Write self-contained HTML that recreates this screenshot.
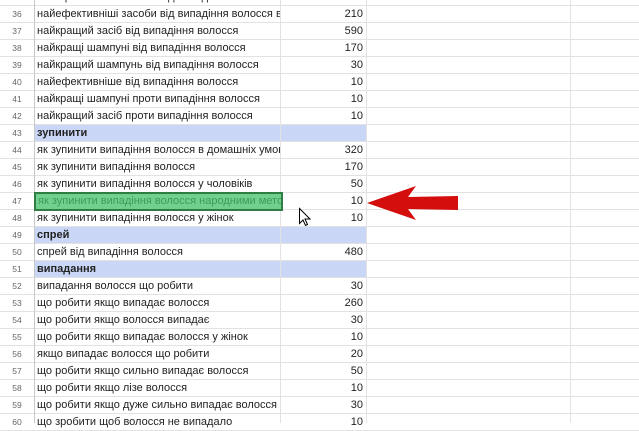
<!DOCTYPE html><html><head><meta charset="utf-8"><style>
body{margin:0;width:639px;height:423px;overflow:hidden;background:#fff;position:relative;font-family:"Liberation Sans",Arial,sans-serif}
.r{position:absolute;left:0;width:639px;height:17px;border-bottom:1px solid #e2e2e2;box-sizing:border-box}
.n{position:absolute;left:0;width:34px;height:16px;font-size:8.5px;color:#666;text-align:center;line-height:17px}
.a{position:absolute;left:35px;width:245px;height:16px;font-size:11px;color:#222;line-height:16px;white-space:nowrap;overflow:hidden;padding-left:2px;box-sizing:border-box}
.b{position:absolute;left:281px;width:85px;height:16px;font-size:11px;color:#222;line-height:16px;text-align:right;padding-right:3px;box-sizing:border-box}
.h .a,.h .b{background:#c9d6f6;font-weight:bold}
.v{position:absolute;top:0;height:423px;width:1px;background:#e2e2e2}
</style></head><body>
<div id="rows"></div>
<div class="r" style="top:-11px"><div class="n">35</div><div class="a">найефективніші засоби від випадіння волосся</div><div class="b">200</div></div>
<div class="r" style="top:6px"><div class="n">36</div><div class="a">найефективніші засоби від випадіння волосся в</div><div class="b">210</div></div>
<div class="r" style="top:23px"><div class="n">37</div><div class="a">найкращий засіб від випадіння волосся</div><div class="b">590</div></div>
<div class="r" style="top:40px"><div class="n">38</div><div class="a">найкращі шампуні від випадіння волосся</div><div class="b">170</div></div>
<div class="r" style="top:57px"><div class="n">39</div><div class="a">найкращий шампунь від випадіння волосся</div><div class="b">30</div></div>
<div class="r" style="top:74px"><div class="n">40</div><div class="a">найефективніше від випадіння волосся</div><div class="b">10</div></div>
<div class="r" style="top:91px"><div class="n">41</div><div class="a">найкращі шампуні проти випадіння волосся</div><div class="b">10</div></div>
<div class="r" style="top:108px"><div class="n">42</div><div class="a">найкращий засіб проти випадіння волосся</div><div class="b">10</div></div>
<div class="r h" style="top:125px"><div class="n">43</div><div class="a">зупинити</div><div class="b"></div></div>
<div class="r" style="top:142px"><div class="n">44</div><div class="a">як зупинити випадіння волосся в домашніх умовах</div><div class="b">320</div></div>
<div class="r" style="top:159px"><div class="n">45</div><div class="a">як зупинити випадіння волосся</div><div class="b">170</div></div>
<div class="r" style="top:176px"><div class="n">46</div><div class="a">як зупинити випадіння волосся у чоловіків</div><div class="b">50</div></div>
<div class="r" style="top:193px"><div class="n">47</div><div class="b">10</div></div>
<div class="r" style="top:210px"><div class="n">48</div><div class="a">як зупинити випадіння волосся у жінок</div><div class="b">10</div></div>
<div class="r h" style="top:227px"><div class="n">49</div><div class="a">спрей</div><div class="b"></div></div>
<div class="r" style="top:244px"><div class="n">50</div><div class="a">спрей від випадіння волосся</div><div class="b">480</div></div>
<div class="r h" style="top:261px"><div class="n">51</div><div class="a">випадання</div><div class="b"></div></div>
<div class="r" style="top:278px"><div class="n">52</div><div class="a">випадання волосся що робити</div><div class="b">30</div></div>
<div class="r" style="top:295px"><div class="n">53</div><div class="a">що робити якщо випадає волосся</div><div class="b">260</div></div>
<div class="r" style="top:312px"><div class="n">54</div><div class="a">що робити якщо волосся випадає</div><div class="b">30</div></div>
<div class="r" style="top:329px"><div class="n">55</div><div class="a">що робити якщо випадає волосся у жінок</div><div class="b">10</div></div>
<div class="r" style="top:346px"><div class="n">56</div><div class="a">якщо випадає волосся що робити</div><div class="b">20</div></div>
<div class="r" style="top:363px"><div class="n">57</div><div class="a">що робити якщо сильно випадає волосся</div><div class="b">50</div></div>
<div class="r" style="top:380px"><div class="n">58</div><div class="a">що робити якщо лізе волосся</div><div class="b">10</div></div>
<div class="r" style="top:397px"><div class="n">59</div><div class="a">що робити якщо дуже сильно випадає волосся</div><div class="b">30</div></div>
<div class="r" style="top:414px"><div class="n">60</div><div class="a">що зробити щоб волосся не випадало</div><div class="b">10</div></div>
<div class="v" style="left:34px;background:#c8c8c8"></div>
<div class="v" style="left:280px"></div>
<div class="v" style="left:366px"></div>
<div class="v" style="left:570px"></div>
<div style="position:absolute;left:34px;top:192px;width:249px;height:19px;background:#72d08e;border:2px solid #2e7d43;box-sizing:border-box;font-size:11px;color:#3e9b5a;line-height:15px;padding-left:2px;white-space:nowrap;overflow:hidden">як зупинити випадіння волосся народними методами</div>
<svg style="position:absolute;left:0;top:0" width="639" height="423">
<polygon points="367,203 416,186 408,197 458,196 458,210 408,209 416,220" fill="#d40d0d"/>
<path d="M299.5,208.5 v15 l3.5,-3.5 l2.5,5.5 l2,-1 l-2.5,-5.5 h5 z" fill="#fff" stroke="#000" stroke-width="1"/>
</svg>
</body></html>
